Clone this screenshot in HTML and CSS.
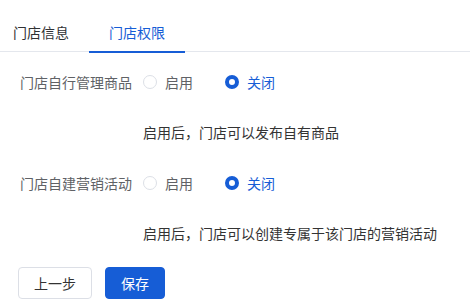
FILE: index.html
```html
<!DOCTYPE html>
<html lang="zh-CN">
<head>
    <meta charset="UTF-8">
    <meta name="viewport" content="width=device-width, initial-scale=1.0">
    <title>门店权限</title>
    <link rel="stylesheet" href="styles.css">
</head>
<body>
    <div class="tabs">
        <div class="tab tab-first">门店信息</div>
        <div class="tab active">门店权限</div>
    </div>

    <div class="content">
        <div class="group">
            <div class="field">
                <div class="field-label">门店自行管理商品</div>
                <label class="radio"><span class="radio-dot"></span>启用</label>
                <label class="radio checked"><span class="radio-dot"></span>关闭</label>
            </div>
            <div class="field-tip">启用后，门店可以发布自有商品</div>
        </div>

        <div class="group">
            <div class="field">
                <div class="field-label">门店自建营销活动</div>
                <label class="radio"><span class="radio-dot"></span>启用</label>
                <label class="radio checked"><span class="radio-dot"></span>关闭</label>
            </div>
            <div class="field-tip">启用后，门店可以创建专属于该门店的营销活动</div>
        </div>

        <div class="actions">
            <button class="btn">上一步</button>
            <button class="btn btn-primary">保存</button>
        </div>
    </div>
</body>
</html>
```

FILE: styles.css
```css
body {
    margin: 0;
    font-family: "Noto Sans CJK SC", "Noto Sans", sans-serif;
    font-size: 14px;
    color: #333;
    background: #fff;
}

.tabs {
    display: flex;
    height: 51px;
    border-bottom: 1px solid #e4e7ed;
}

.tab {
    position: relative;
    padding: 0 20px;
    line-height: 64px;
    color: #303133;
}

.tab-first {
    padding-left: 13px;
}

.tab.active {
    color: #165dd6;
}

.tab.active::after {
    content: "";
    position: absolute;
    left: 0;
    right: 0;
    bottom: -2px;
    height: 2px;
    background: #165dd6;
}

.content {
    padding: 14px 20px 0 20px;
}

.group {
    margin-bottom: 19px;
}

.field {
    display: flex;
    align-items: center;
    height: 32px;
}

.field-label {
    width: 112px;
    margin-right: 11px;
    color: #606266;
}

.radio {
    display: flex;
    align-items: center;
    margin-right: 32px;
    color: #606266;
    cursor: pointer;
}

.radio-dot {
    box-sizing: border-box;
    width: 14px;
    height: 14px;
    margin-right: 8px;
    border: 1px solid #dcdfe6;
    border-radius: 50%;
    background: #fff;
}

.radio.checked {
    color: #165dd6;
}

.radio.checked .radio-dot {
    border: 4.5px solid #165dd6;
}

.field-tip {
    margin-top: 18px;
    padding-left: 123px;
    line-height: 32px;
    color: #333;
}

.actions {
    display: flex;
    gap: 13px;
    margin-left: -2px;
    margin-top: -1px;
}

.btn {
    height: 32px;
    padding: 0 15px;
    border: 1px solid #dcdfe6;
    border-radius: 4px;
    background: #fff;
    font-family: inherit;
    font-size: 14px;
    color: #333;
    cursor: pointer;
}

.btn-primary {
    border-color: #165dd6;
    background: #165dd6;
    color: #fff;
}
```
